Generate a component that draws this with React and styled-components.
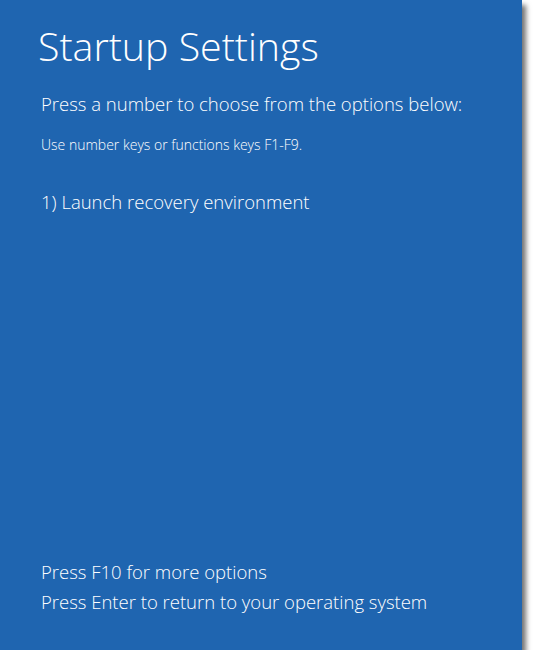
import React from 'react'
import styled, { createGlobalStyle } from 'styled-components'

const Global = createGlobalStyle`
  body {
    margin: 0;
    background: #ffffff;
    font-family: "Open Sans", "Noto Sans", sans-serif;
  }
`

const Screen = styled.div`
  width: 522px;
  height: 650px;
  box-sizing: border-box;
  background: #1f65b0;
  color: #ffffff;
  box-shadow: 4px 5px 5px rgba(0, 0, 0, 0.55);
  display: flex;
  flex-direction: column;
  padding: 20px 0 33px 41px;
`

const Title = styled.h1`
  margin: 0 0 0 -3px;
  font-size: 39.3px;
  font-weight: 300;
  line-height: 52px;
`

const Line = styled.p`
  margin: ${p => p.mt || 0}px 0 0;
  font-size: ${p => p.size || 18.5}px;
  line-height: ${p => p.lh || 30}px;
  font-weight: 300;
`

const Spacer = styled.div`
  flex: 1;
`

export default function App() {
  return (
    <>
      <Global />
      <Screen>
        <Title>Startup Settings</Title>
        <Line mt={17}>Press a number to choose from the options below:</Line>
        <Line size={14} lh={20} mt={16}>Use number keys or functions keys F1-F9.</Line>
        <Line mt={32}>1) Launch recovery environment</Line>
        <Spacer />
        <Line>Press F10 for more options</Line>
        <Line>Press Enter to return to your operating system</Line>
      </Screen>
    </>
  )
}
